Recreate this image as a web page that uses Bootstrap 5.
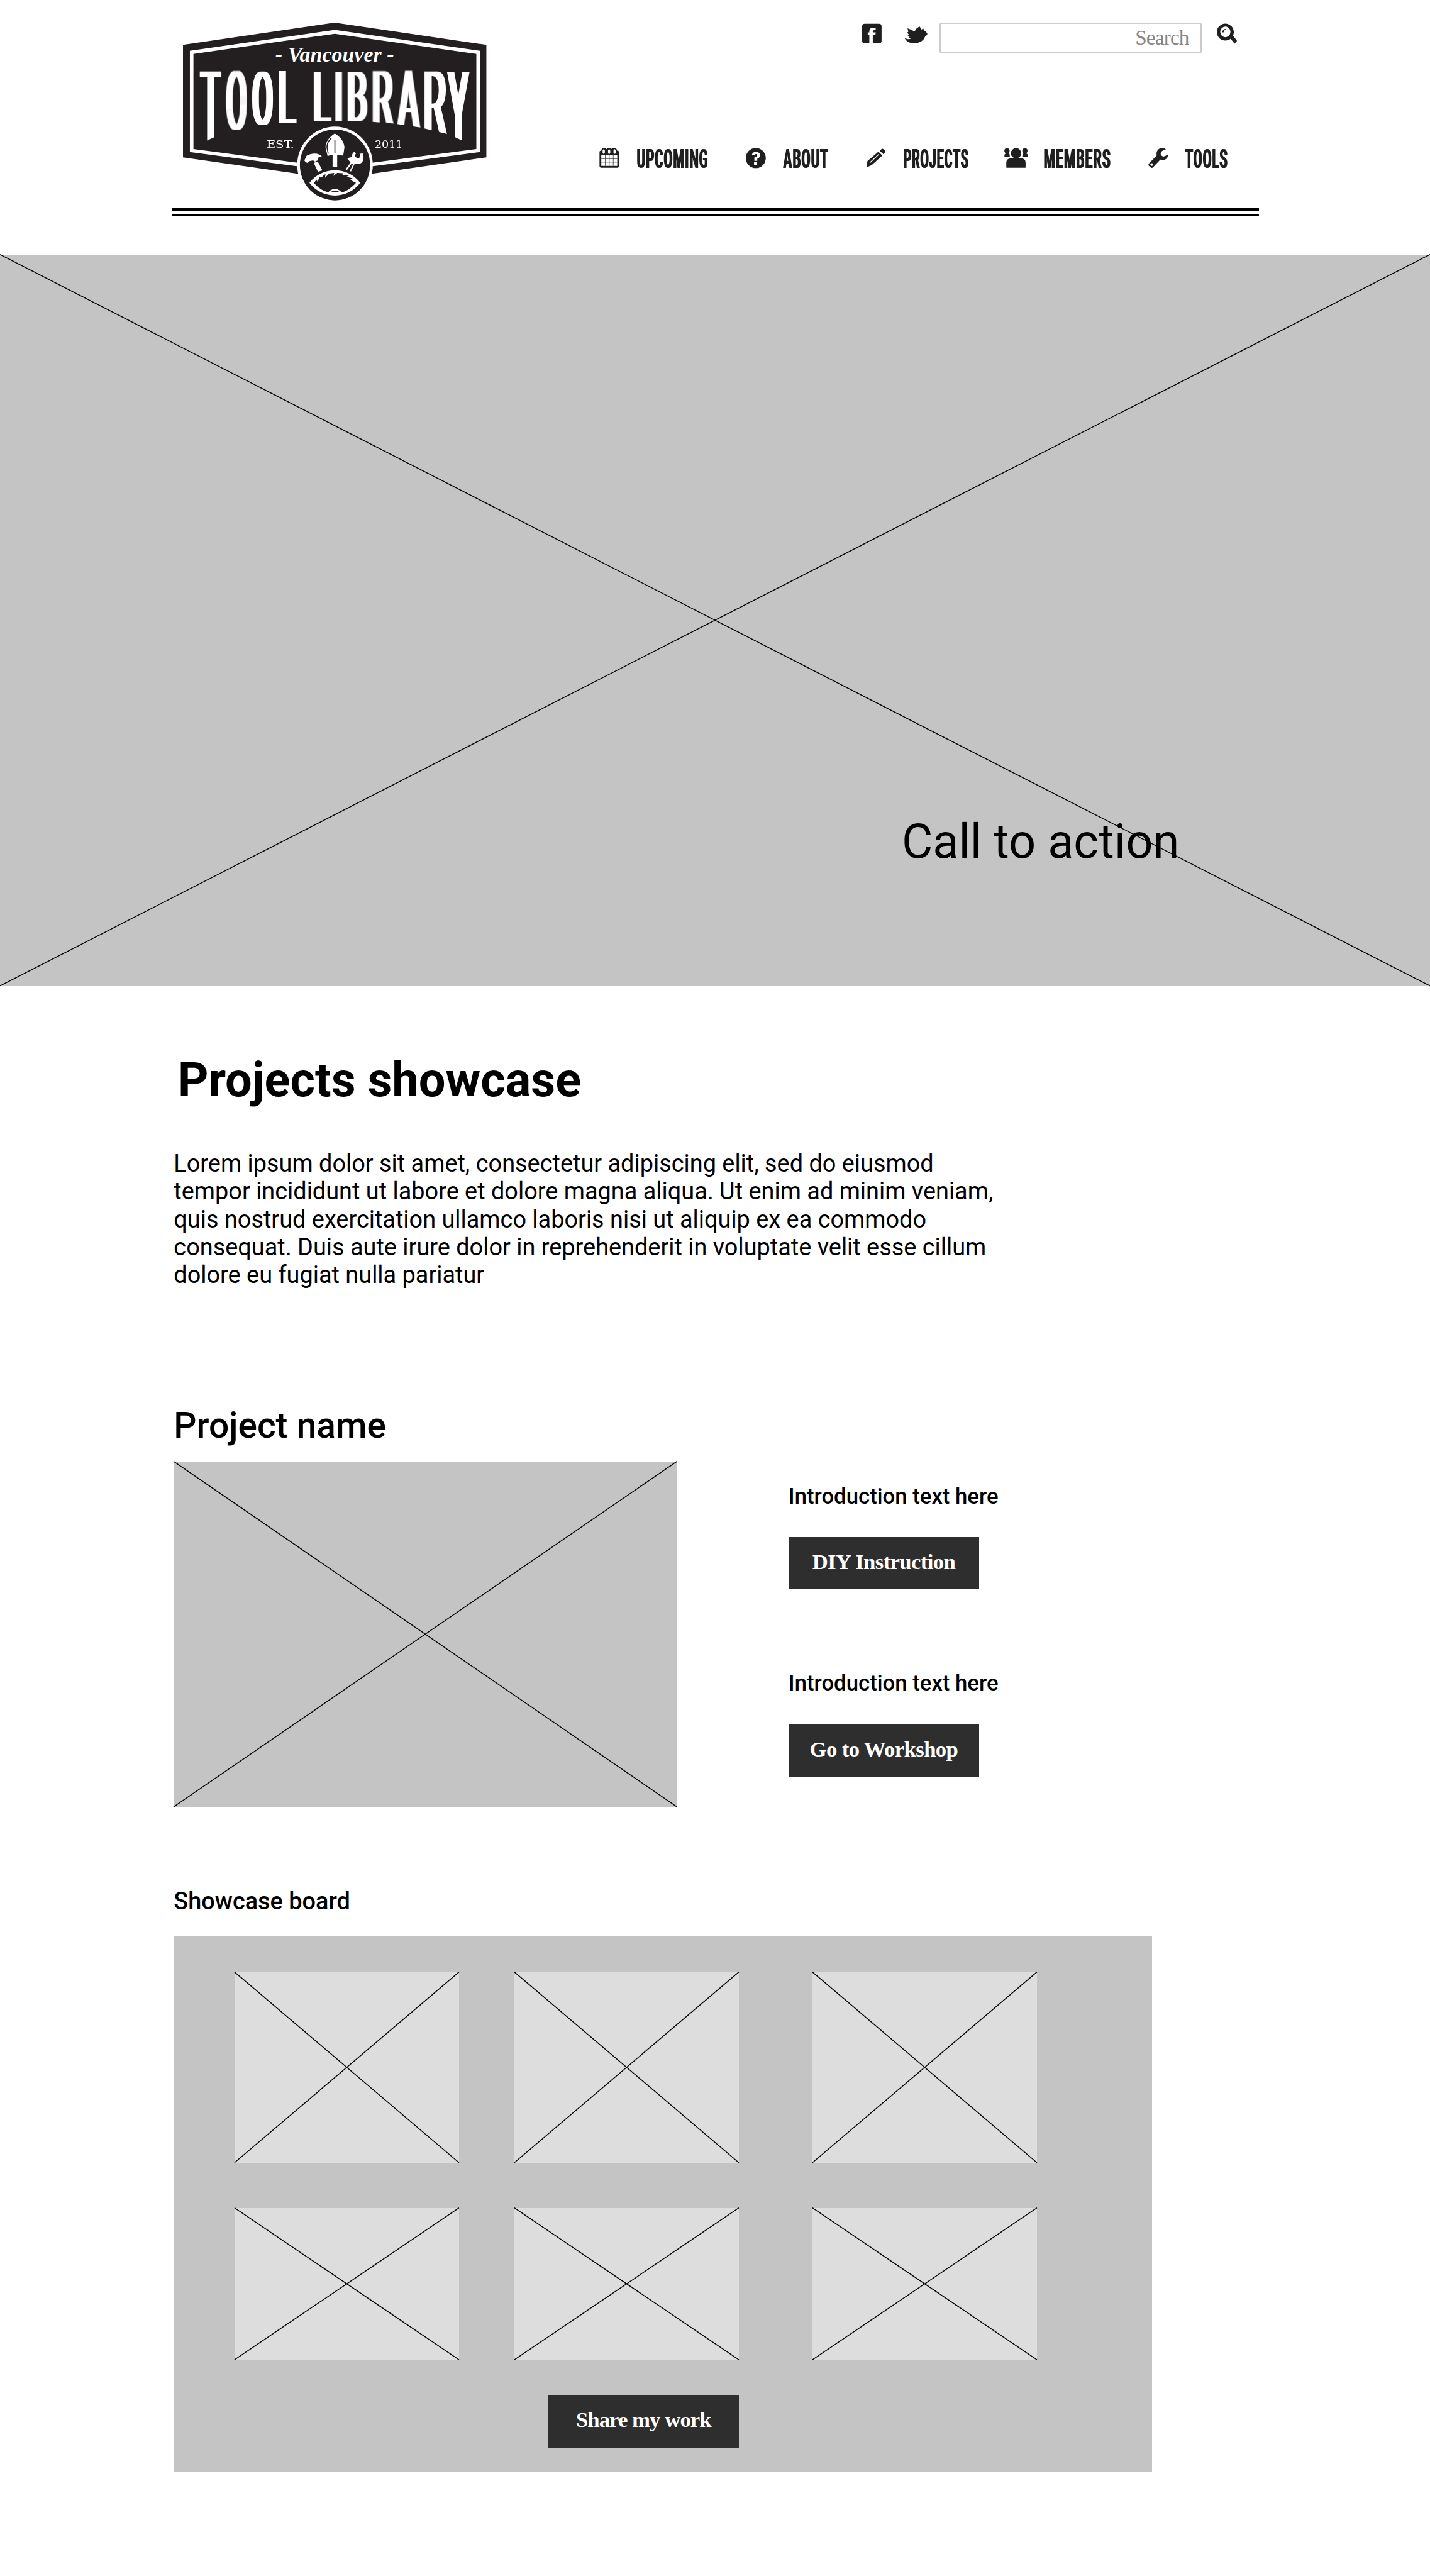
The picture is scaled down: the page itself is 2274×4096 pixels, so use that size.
<!DOCTYPE html>
<html lang="en">
<head>
<meta charset="utf-8">
<meta name="viewport" content="width=device-width, initial-scale=1">
<title>Vancouver Tool Library – Projects showcase</title>
<link href="https://cdn.jsdelivr.net/npm/bootstrap@5.3.0/dist/css/bootstrap.min.css" rel="stylesheet">
<style>
  /* 1rem is ten design units of the 2880-unit wide layout */
  html { font-size: 7.89583px; }
  body { font-family: Roboto, "Liberation Sans", sans-serif; color: #000; background: #fff; line-height: 1.1719; font-size: 4.8rem; height: 518.8rem; overflow-x: hidden; }
  svg { display: block; overflow: visible; flex: none; }
  .site-head { box-sizing: content-box; width: 219rem; height: 41.95rem; margin: 0 0 7.7rem 34.6rem; border-bottom: 1.65rem double #000; }
  .logo-link { margin: 4.6rem 0 0 2.27rem; }
  .head-tools { padding: 4.55rem 4.4rem 0 0; }
  .search-field { width: 52.8rem; height: 6.2rem; margin: 0 3.1rem 0 2.2rem; padding: 0 2.3rem .1rem; border: 2px solid #ccc; border-radius: .4rem; font-family: "Liberation Serif", serif; font-size: 4.2rem; letter-spacing: -.1rem; }
  .search-field::placeholder { color: #868686; opacity: 1; }
  .main-nav { gap: 7.6rem; padding: 0 6.4rem 8.05rem 0; }
  .nav-word { font: 500 5.3rem Roboto, sans-serif; fill: #1f1f1f; letter-spacing: 3.5px; filter: url(#widen-nav); }
  .ink { fill: #1f1f1f; }
  .hero { height: 147.3rem; }
  .ph { background: #c4c4c4; }
  .ph svg { width: 100%; height: 100%; transform: translateY(-.05rem); }
  .ph line { stroke: #000; stroke-width: 1.5px; vector-effect: non-scaling-stroke; }
  .hero-cta { position: absolute; left: 181.6rem; top: 112.75rem; font-size: 9.6rem; white-space: nowrap; }
  .content { padding: 13.4rem 0 0 35rem; }
  h1, h2, h3, p { margin: 0; line-height: 1.1719; }
  .content h1 { font-size: 9.6rem; font-weight: 700; padding-left: .8rem; }
  .intro { width: 167rem; margin-top: 8.25rem; }
  .content h2 { font-size: 7.2rem; font-weight: 500; margin: 23.3rem 0 2.95rem; }
  .content h3 { font-size: 4.8rem; font-weight: 500; margin: 16.2rem 0 4.2rem; }
  .shot { width: 101.4rem; height: 69.6rem; }
  .side { margin-left: 22.4rem; padding-top: 4.5rem; font-size: 4.4rem; font-weight: 500; }
  .side p + .btn { margin-top: 5.55rem; }
  .side .btn + p { margin-top: 16.3rem; }
  .side .btn + p + .btn { margin-top: 5.75rem; }
  .btn-ink { width: 38.4rem; height: 10.6rem; padding: 0 0 .5rem; display: flex; align-items: center; justify-content: center; border: 0; border-radius: 0; background: #2e2e2e; color: #fff; font: 700 4.4rem "Liberation Serif", serif; letter-spacing: -.08rem; white-space: nowrap; }
  .btn-ink:hover { background: #444; color: #fff; }
  .board { width: 197rem; height: 107.8rem; padding: 7.2rem 0 0 12.2rem; background: #c4c4c4; }
  .tiles { display: grid; grid-template-columns: 56.4rem 60rem 45.2rem; grid-template-rows: 38.4rem 30.6rem; row-gap: 9.2rem; }
  .tiles .ph { width: 45.2rem; background: #ddd; }
  .share { margin: 7rem 0 0 63.2rem; letter-spacing: -.12rem; }
  .crest text { fill: #fff; }
  .crest .big text { font-family: Roboto, sans-serif; font-weight: 300; font-size: 100px; text-anchor: middle; }
</style>
<script src="https://cdn.jsdelivr.net/npm/bootstrap@5.3.0/dist/js/bootstrap.bundle.min.js"></script>
</head>
<body>

<header class="site-head d-flex justify-content-between align-items-stretch">
  <a class="logo-link" href="#" aria-label="Vancouver Tool Library">
    <svg class="crest" style="width:61.1rem;height:35.8rem" viewBox="68 48 1452 1074" preserveAspectRatio="none">
      <defs>
        <!-- thicken letters sideways only, for a heavy condensed face -->
        <filter id="widen" x="-5%" y="-5%" width="110%" height="110%" color-interpolation-filters="sRGB"><feMorphology operator="dilate" radius="11 0.01"/></filter>
        <filter id="widen-nav" x="-5%" y="-5%" width="110%" height="110%" color-interpolation-filters="sRGB"><feMorphology operator="dilate" radius="1 0.01"/></filter>
      </defs>
      <polygon fill="#231f20" points="68,182 794,48 1520,182 1520,862 795,993 68,862"/>
      <polygon fill="#fff" points="101,218 795,92 1489,218 1489,830 795,946 101,830"/>
      <polygon fill="#231f20" points="118,237 795,115 1472,237 1472,812 795,924 118,812"/>
      <text x="510" y="284" font-family="Liberation Serif" font-weight="700" font-style="italic" font-size="126" textLength="568" lengthAdjust="spacingAndGlyphs">- Vancouver -</text>
      <g class="big" filter="url(#widen)">
        <text transform="translate(200 770) scale(1.45 6.02)">T</text>
        <text transform="translate(324 692) scale(1.36 4.86)">O</text>
        <text transform="translate(449 664) scale(1.36 4.46)">O</text>
        <text transform="translate(565 653) scale(1.44 4.37)">L</text>
        <text transform="translate(732 640) scale(1.44 4.19)">L</text>
        <text transform="translate(813 640) scale(1.3 4.19)">I</text>
        <text transform="translate(901 640) scale(1.5 4.19)">B</text>
        <text transform="translate(1023 662) scale(1.5 4.5)">R</text>
        <text transform="translate(1147 686) scale(1.5 4.84)">A</text>
        <text transform="translate(1274 724) scale(1.65 5.37)">R</text>
        <text transform="translate(1386 765) scale(1.46 5.95)">Y</text>
      </g>
      <path fill="#231f20" d="M160 774L222 738V785H160ZM965 646L1078 658L1205 682L1338 722L1366 738L1410 764V790H965Z"/>
      <text x="468" y="804" font-family="DejaVu Serif" font-size="63" textLength="132" lengthAdjust="spacingAndGlyphs">EST.</text>
      <text x="986" y="804" font-family="DejaVu Serif" font-size="63" textLength="134" lengthAdjust="spacingAndGlyphs">2011</text>
      <ellipse cx="795.5" cy="908" rx="181" ry="232" fill="#fff"/>
      <ellipse cx="795.5" cy="908" rx="168" ry="214" fill="#231f20"/>
      <g fill="#fff">
        <path d="M795 718C820 738 838 765 841 800L835 852L806 846V922H784V846L760 854L750 800C752 765 770 738 795 718Z"/>
        <path d="M649 880L660 852C680 835 722 832 734 860C722 854 711 862 713 880L700 888L690 880L670 886L666 896L655 892Z"/>
        <path d="M694 895L713 887L735 940L714 949Z"/>
        <path d="M889 828L896 838C888 852 893 862 905 867C918 864 920 852 913 840L930 838C934 865 932 890 918 898C908 905 898 903 890 900L872 948L866 945L882 904L874 902L853 938L846 934L870 894L862 880L854 868L878 858C876 845 880 835 889 828Z"/>
        <path d="M673 1016C735 915 856 915 916 1016C856 1118 735 1118 673 1016Z"/>
      </g>
      <path d="M795 755V835M763 840L757 800C758 775 766 758 778 745" stroke="#231f20" stroke-width="5" fill="none"/>
      <path fill="#231f20" d="M694 1016L708 996L712 1010L722 978L728 986L750 962L748 986L766 960L792 956L788 974L806 956L836 958L830 968L862 972L850 980L880 988L868 998L896 1016C870 1050 850 1068 826 1074C815 1046 776 1046 764 1074C735 1062 715 1046 694 1016Z"/>
      <path fill="#231f20" d="M774 1073C782 1060 810 1060 818 1073Z"/>
    </svg>
  </a>

  <div class="d-flex flex-column justify-content-between align-items-end">
    <div class="head-tools d-flex align-items-start">
      <a href="#" aria-label="Facebook"><svg class="ink" style="width:8.45rem;height:6.2rem" viewBox="70 46 157.8 186" preserveAspectRatio="none"><path fill-rule="evenodd" d="M80 53H133Q143 53 143 68V156Q143 171 133 171H110V122H120L121 105H110V98Q110 92 115 92H121V76H112Q97 77 97 97V105H91V122H97V171H80Q70 171 70 156V68Q70 53 80 53Z"/></svg></a>
      <a href="#" aria-label="Twitter"><svg class="ink" style="width:4.9rem;height:6.2rem" viewBox="227.8 46 91.4 186" preserveAspectRatio="none"><path d="M240 80C248 85 258 92 267 99C270 84 277 76 286 70C288 76 290 82 291 88L300 82L301 93L309 98L308 104L314 107V121L307 126C302 154 286 171 263 171C248 170 236 160 228 137C234 144 246 150 252 142L243 137L248 132L240 122L246 121L239 106L243 101Z"/></svg></a>
      <input class="form-control text-end search-field" type="text" placeholder="Search" aria-label="Search">
      <a href="#" aria-label="Search"><svg class="ink" style="width:4.1rem;height:6.2rem" viewBox="1400 46 76.5 186" preserveAspectRatio="none"><path fill-rule="evenodd" d="M1432 52A32 51 0 1 1 1431.900 52ZM1432 70A19 32 0 1 0 1432.100 70Z"/><path d="M1450 140L1460 122L1476 156L1467 173Z"/><path d="M1423 105Q1423 90 1433 86" fill="none" stroke="#1f1f1f" stroke-width="5"/></svg></a>
    </div>

    <nav class="main-nav d-flex" aria-label="Main">
      <a class="d-flex" href="#">
        <svg class="ink" style="width:7.64rem;height:4.1rem" viewBox="104 113 171 123" preserveAspectRatio="none"><path fill-rule="evenodd" d="M105 136Q106 130 113 130C113 110 135 112 136 122C138 112 159 112 161 122C163 112 184 112 184 130Q193 131 193 140V222Q193 234 184 234H114Q105 234 105 222ZM119 130V145Q124 154 129 145V130Q124 114 119 130ZM143.500 130V145Q148.500 154 153.500 145V130Q148.500 114 143.500 130ZM168 130V145Q173 154 178 145V130Q173 114 168 130ZM113 158H185V222H113Z"/><path d="M113 179H185M113 200H185M131 158V222M149 158V222M167 158V222" stroke="#333" stroke-width="2.500"/></svg>
        <svg style="width:14.32rem;height:4.1rem"><text class="nav-word" x="0" y="4.03rem" textLength="114" lengthAdjust="spacingAndGlyphs">UPCOMING</text></svg>
      </a>
      <a class="d-flex" href="#">
        <svg class="ink" style="width:7.56rem;height:4.1rem" viewBox="767 113 169 123" preserveAspectRatio="none"><ellipse cx="812" cy="175" rx="45" ry="61"/><path d="M801 157Q802 144 814 144Q826 146 825 160Q824 170 812 175V192" fill="none" stroke="#fff" stroke-width="13"/><rect x="804" y="200" width="14" height="16" fill="#fff"/></svg>
        <svg style="width:9.04rem;height:4.1rem"><text class="nav-word" x="0" y="4.03rem" textLength="72" lengthAdjust="spacingAndGlyphs">ABOUT</text></svg>
      </a>
      <a class="d-flex" href="#">
        <svg class="ink" style="width:7.6rem;height:4.1rem" viewBox="1308 113 170 123" preserveAspectRatio="none"><path d="M1310 232L1315 193L1364 137L1382 160L1334 218Z"/><path d="M1370 131L1380 119Q1387 117 1394 129Q1397 138 1394 142L1387 152Z"/><path d="M1326 203L1366 152" stroke="#fff" stroke-width="4.500"/></svg>
        <svg style="width:12.67rem;height:4.1rem"><text class="nav-word" x="0" y="4.03rem" textLength="104" lengthAdjust="spacingAndGlyphs">PROJECTS</text></svg>
      </a>
      <a class="d-flex" href="#">
        <svg class="ink" style="width:7.95rem;height:4.1rem" viewBox="398 113 174 123" preserveAspectRatio="none"><ellipse cx="450" cy="146" rx="23" ry="31"/><path d="M407 232V200Q408 178 428 177Q450 168 472 177Q491 178 492 200V232Q492 234 489 234H410Q407 234 407 232Z"/><ellipse cx="410" cy="131" rx="11.500" ry="15"/><ellipse cx="489" cy="131" rx="11.500" ry="15"/><path d="M406 138H415Q414 148 421 150L423 170H399V155Q400 149 406 147ZM485 138H494V147Q501 149 501 155V170H477L479 150Q486 148 485 138Z"/></svg>
        <svg style="width:13.4rem;height:4.1rem"><text class="nav-word" x="0" y="4.03rem" textLength="107" lengthAdjust="spacingAndGlyphs">MEMBERS</text></svg>
      </a>
      <a class="d-flex" href="#">
        <svg class="ink" style="width:7.48rem;height:4.1rem" viewBox="1029 113 163 123" preserveAspectRatio="none"><path fill-rule="evenodd" d="M1107 122Q1086 130 1083 146Q1084 162 1095 166Q1106 163 1116 152Q1116 186 1092 187L1082 184L1050 231Q1045 238 1040 232L1031 221Q1028 213 1033 206L1066 160Q1062 133 1077 119Q1092 109 1107 122ZM1044 206A6 8 0 1 0 1044.100 206Z"/></svg>
        <svg style="width:8.5rem;height:4.1rem"><text class="nav-word" x="0" y="4.03rem" textLength="68" lengthAdjust="spacingAndGlyphs">TOOLS</text></svg>
      </a>
    </nav>
  </div>
</header>

<main>
  <section class="hero ph position-relative">
    <svg viewBox="0 0 100 100" preserveAspectRatio="none"><line x1="0" y1="0" x2="100" y2="100"/><line x1="0" y1="100" x2="100" y2="0"/></svg>
    <div class="hero-cta">Call to action</div>
  </section>

  <section class="content">
    <h1>Projects showcase</h1>
    <p class="intro">Lorem ipsum dolor sit amet, consectetur adipiscing elit, sed do eiusmod tempor incididunt ut labore et dolore magna aliqua. Ut enim ad minim veniam, quis nostrud exercitation ullamco laboris nisi ut aliquip ex ea commodo consequat. Duis aute irure dolor in reprehenderit in voluptate velit esse cillum dolore eu fugiat nulla pariatur</p>

    <h2>Project name</h2>
    <div class="d-flex align-items-start">
      <div class="shot ph">
        <svg viewBox="0 0 100 100" preserveAspectRatio="none"><line x1="0" y1="0" x2="100" y2="100"/><line x1="0" y1="100" x2="100" y2="0"/></svg>
      </div>
      <div class="side">
        <p>Introduction text here</p>
        <a class="btn btn-ink" href="#">DIY Instruction</a>
        <p>Introduction text here</p>
        <a class="btn btn-ink" href="#">Go to Workshop</a>
      </div>
    </div>

    <h3>Showcase board</h3>
    <div class="board">
      <div class="tiles">
        <div class="ph"><svg viewBox="0 0 100 100" preserveAspectRatio="none"><line x1="0" y1="0" x2="100" y2="100"/><line x1="0" y1="100" x2="100" y2="0"/></svg></div>
        <div class="ph"><svg viewBox="0 0 100 100" preserveAspectRatio="none"><line x1="0" y1="0" x2="100" y2="100"/><line x1="0" y1="100" x2="100" y2="0"/></svg></div>
        <div class="ph"><svg viewBox="0 0 100 100" preserveAspectRatio="none"><line x1="0" y1="0" x2="100" y2="100"/><line x1="0" y1="100" x2="100" y2="0"/></svg></div>
        <div class="ph"><svg viewBox="0 0 100 100" preserveAspectRatio="none"><line x1="0" y1="0" x2="100" y2="100"/><line x1="0" y1="100" x2="100" y2="0"/></svg></div>
        <div class="ph"><svg viewBox="0 0 100 100" preserveAspectRatio="none"><line x1="0" y1="0" x2="100" y2="100"/><line x1="0" y1="100" x2="100" y2="0"/></svg></div>
        <div class="ph"><svg viewBox="0 0 100 100" preserveAspectRatio="none"><line x1="0" y1="0" x2="100" y2="100"/><line x1="0" y1="100" x2="100" y2="0"/></svg></div>
      </div>
      <a class="btn btn-ink share" href="#">Share my work</a>
    </div>
  </section>
</main>
</body>
</html>
